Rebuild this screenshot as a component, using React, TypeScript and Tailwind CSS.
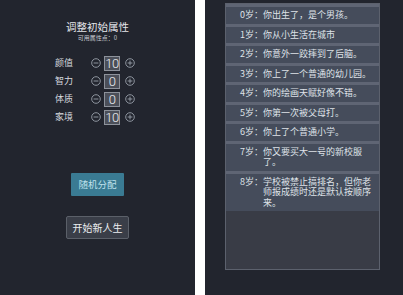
import React from "react";

const attrs = [
  { name: "颜值", value: 10 },
  { name: "智力", value: 0 },
  { name: "体质", value: 0 },
  { name: "家境", value: 10 },
];

const events = [
  { age: 0, text: "你出生了，是个男孩。" },
  { age: 1, text: "你从小生活在城市" },
  { age: 2, text: "你意外一跤摔到了后脑。" },
  { age: 3, text: "你上了一个普通的幼儿园。" },
  { age: 4, text: "你的绘画天赋好像不错。" },
  { age: 5, text: "你第一次被父母打。" },
  { age: 6, text: "你上了个普通小学。" },
  { age: 7, text: "你又要买大一号的新校服了。" },
  { age: 8, text: "学校被禁止搞排名，但你老师报成绩时还是默认按顺序来。" },
];

const font = { fontFamily: '"Noto Sans CJK SC", "Noto Sans", sans-serif' };

function CircleBtn({ plus }: { plus?: boolean }) {
  return (
    <svg width="10" height="10" viewBox="0 0 10 10" className="shrink-0">
      <circle cx="5" cy="5" r="4.3" fill="none" stroke="#9aa0aa" strokeWidth="0.9" />
      <line x1="2.6" y1="5" x2="7.4" y2="5" stroke="#9aa0aa" strokeWidth="0.9" />
      {plus && <line x1="5" y1="2.6" x2="5" y2="7.4" stroke="#9aa0aa" strokeWidth="0.9" />}
    </svg>
  );
}

function AttributePanel() {
  return (
    <div className="w-[195px] h-[295px] shrink-0 bg-[#22252e] flex flex-col items-center pt-[20px]">
      <p className="text-[10.5px] leading-[14px] text-[#e4e6ea]">调整初始属性</p>
      <p className="text-[6px] leading-[8px] text-[#c9ccd2]">可用属性点：0</p>

      <div className="self-start ml-[55px] mt-[12px] flex flex-col">
        {attrs.map(a => (
          <div key={a.name} className="h-[18px] flex items-center">
            <span className="w-[18px] text-[9px] leading-[12px] text-[#d6d9de] whitespace-nowrap">{a.name}</span>
            <div className="ml-[18px]">
              <CircleBtn />
            </div>
            <div
              className="ml-[3px] w-[16px] h-[15px] bg-[#4b4f59] border border-[#8d929b] flex items-center justify-center text-[13px] leading-[13px] font-light text-[#eef0f3] tracking-[-0.5px]"
              style={{ fontFamily: "Roboto, sans-serif" }}
            >
              {a.value}
            </div>
            <div className="ml-[5px]">
              <CircleBtn plus />
            </div>
          </div>
        ))}
      </div>

      <button className="mt-[47px] w-[53px] h-[23px] bg-[#3a7b93] text-[9.5px] text-[#bfe1ec] rounded-[1px]">
        随机分配
      </button>
      <button className="mt-[20px] w-[63px] h-[23px] bg-[#3a3e48] border border-[#5b6069] text-[10px] text-[#eceef1] rounded-[2px]">
        开始新人生
      </button>
    </div>
  );
}

function LifePanel() {
  return (
    <div className="w-[198px] h-[295px] shrink-0 bg-[#22252e] pt-[3px] pl-[20px]">
      <div className="w-[155px] h-[267px] bg-[#393c46] border border-[#5c616d] flex flex-col">
        {events.map(e => (
          <div
            key={e.age}
            className="flex bg-[#454c5b] border-t-[3px] border-[#5f6574] py-[3px] text-[9px] leading-[10.5px] text-[#dfe2e8]"
          >
            <span className="ml-[14px] shrink-0 whitespace-nowrap">{e.age}岁：</span>
            <span className="w-[110px] shrink-0">{e.text}</span>
          </div>
        ))}
      </div>
    </div>
  );
}

export default function App() {
  return (
    <div className="w-[403px] h-[295px] bg-white flex overflow-hidden" style={font}>
      <AttributePanel />
      <div className="w-[10px] shrink-0" />
      <LifePanel />
    </div>
  );
}
